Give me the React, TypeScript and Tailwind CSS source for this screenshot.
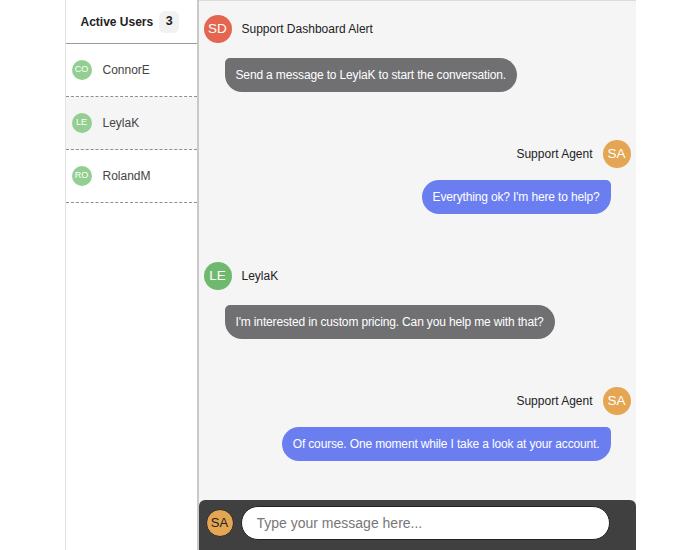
import React from 'react';

type Msg = {
  id: number;
  initials: string;
  name: string;
  text: string;
  mine: boolean;
  color: string;
};

const USERS = [
  { initials: 'CO', name: 'ConnorE', active: false },
  { initials: 'LE', name: 'LeylaK', active: true },
  { initials: 'RO', name: 'RolandM', active: false },
];

const MESSAGES: Msg[] = [
  { id: 1, initials: 'SD', name: 'Support Dashboard Alert', text: 'Send a message to LeylaK to start the conversation.', mine: false, color: 'bg-[#e4664f]' },
  { id: 2, initials: 'SA', name: 'Support Agent', text: "Everything ok? I'm here to help?", mine: true, color: 'bg-[#e4a652]' },
  { id: 3, initials: 'LE', name: 'LeylaK', text: "I'm interested in custom pricing. Can you help me with that?", mine: false, color: 'bg-[#6fb96f]' },
  { id: 4, initials: 'SA', name: 'Support Agent', text: 'Of course. One moment while I take a look at your account.', mine: true, color: 'bg-[#e4a652]' },
];

const App: React.FC = () => {
  return (
    <div className="w-[700px] h-[550px] bg-white flex justify-center font-['Liberation_Sans',Arial,sans-serif]">
      {/* Sidebar */}
      <div className="w-[134px] h-full bg-white border-l border-[#e2e2e2] border-r-2 border-r-[#c9c9c9] flex flex-col">
        <div className="h-[44px] flex items-center gap-[6px] border-b border-[#9a9a9a] pl-[15px]">
          <span className="text-[12px] font-bold text-[#222]">Active Users</span>
          <span className="w-[20px] h-[22px] rounded-md bg-[#f2f2f2] flex items-center justify-center text-[12.5px] font-bold text-[#222]">3</span>
        </div>
        {USERS.map((u) => (
          <div
            key={u.name}
            className={`h-[53px] flex items-center gap-[11px] pl-[6px] border-b border-dashed border-[#8f8f8f] ${u.active ? 'bg-[#f5f5f5]' : 'bg-white'}`}
          >
            <div className="w-[20px] h-[20px] rounded-full bg-[#93cf93] flex items-center justify-center text-[9px] text-white">
              {u.initials}
            </div>
            <span className="text-[12px] text-[#444]">{u.name}</span>
          </div>
        ))}
      </div>

      {/* Chat */}
      <div className="w-[437px] h-full bg-[#f5f5f5] border-t border-[#dcdcdc] flex flex-col">
        <div className="flex-1 flex flex-col gap-[48px] pt-[14px] px-[5px]">
          {MESSAGES.map((m) => (
            <div key={m.id} className={`flex flex-col ${m.mine ? 'items-end gap-[12px]' : 'items-start gap-[15px]'}`}>
              <div className={`flex items-center gap-[10px] ${m.mine ? 'flex-row-reverse' : ''}`}>
                <div className={`w-[28px] h-[28px] rounded-full ${m.color} flex items-center justify-center text-[13.5px] text-white`}>
                  {m.initials}
                </div>
                <span className="text-[12px] text-[#222]">{m.name}</span>
              </div>
              <div
                className={`h-[34px] flex items-center px-[11px] text-[12px] tracking-[-0.15px] text-white rounded-[17px] ${
                  m.mine
                    ? 'bg-[#6b7ef0] rounded-tr-[5px] mr-[20px]'
                    : 'bg-[#707073] rounded-tl-[5px] ml-[21px]'
                }`}
              >
                {m.text}
              </div>
            </div>
          ))}
        </div>

        {/* Input bar */}
        <div className="h-[50px] bg-[#404040] rounded-t-[6px] flex items-start pt-[6px] gap-[7px] pl-[7px] pr-[26px]">
          <div className="mt-[3px] w-[28px] h-[28px] rounded-full bg-[#e4a652] border border-[#2a2a2a] flex items-center justify-center text-[13px] text-[#222]">
            SA
          </div>
          <input
            type="text"
            placeholder="Type your message here..."
            className="flex-1 h-[34px] rounded-full bg-white border border-[#222] px-[15px] text-[14px] text-[#333] placeholder:text-[#777] outline-none"
          />
        </div>
      </div>
    </div>
  );
};

export default App;
